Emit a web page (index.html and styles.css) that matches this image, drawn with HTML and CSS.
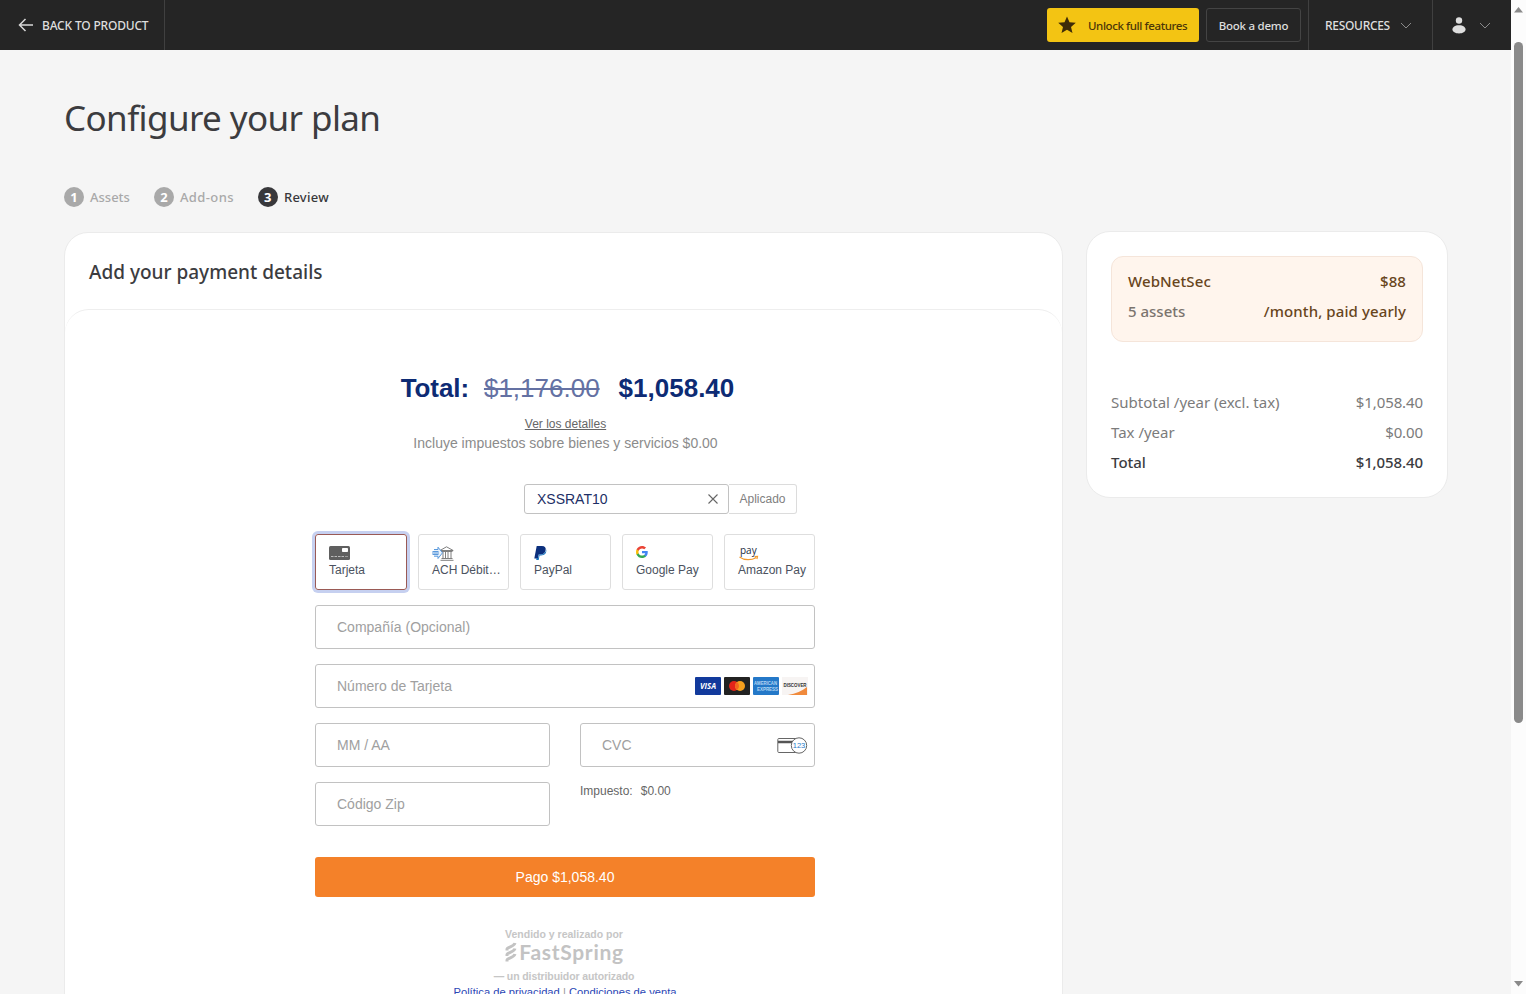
FILE: index.html
```html
<!DOCTYPE html>
<html lang="en">
<head>
    <meta charset="UTF-8">
    <meta name="viewport" content="width=device-width, initial-scale=1.0">
    <title>Configure your plan</title>
    <link rel="stylesheet" href="styles.css">
</head>
<body>
    <div class="page">
        <header class="topbar">
            <a class="back" href="#">
                <svg width="16" height="14" viewBox="0 0 16 14" fill="none" stroke="#d8d8d8" stroke-width="1.5"><path d="M15 7H1.5M7.5 1L1.5 7l6 6"/></svg>
                <span>BACK TO PRODUCT</span>
            </a>
            <div class="actions">
                <button class="unlock">
                    <svg width="18" height="18" viewBox="0 0 18 18" fill="#3f2c08"><path d="M9 0.5l2.5 5.8 6.3.5-4.8 4.1 1.5 6.2L9 13.8l-5.5 3.3L5 10.900 0.200 6.800l6.300-.5z"/></svg>
                    <span>Unlock full features</span>
                </button>
                <button class="demo">Book a demo</button>
            </div>
            <div class="resources">
                <span>RESOURCES</span>
                <svg width="12" height="7" viewBox="0 0 12 7" fill="none" stroke="#8a8a8a"><path d="M1 1l5 5 5-5"/></svg>
            </div>
            <div class="user">
                <svg width="14" height="17" viewBox="0 0 14 17" fill="#dedede"><circle cx="7" cy="3.500" r="3.200"/><path d="M7 8.200c4.200 0 6.600 2 6.600 4.400S10.600 16.500 7 16.500.4 15 .4 12.600 2.800 8.200 7 8.200z"/></svg>
                <svg width="12" height="7" viewBox="0 0 12 7" fill="none" stroke="#8a8a8a"><path d="M1 1l5 5 5-5"/></svg>
            </div>
        </header>

        <main>
            <h1>Configure your plan</h1>
            <ol class="steps">
                <li><b>1</b><span>Assets</span></li>
                <li><b>2</b><span>Add-ons</span></li>
                <li class="current"><b>3</b><span>Review</span></li>
            </ol>

            <div class="columns">
                <section class="payment">
                    <h2>Add your payment details</h2>
                    <div class="payment-body">
                        <form class="checkout" lang="es">
                            <div class="total">
                                <strong class="label">Total:</strong>
                                <del>$1,176.00</del>
                                <strong>$1,058.40</strong>
                            </div>
                            <a class="details" href="#">Ver los detalles</a>
                            <p class="included">Incluye impuestos sobre bienes y servicios $0.00</p>

                            <div class="coupon">
                                <div class="code">
                                    <span>XSSRAT10</span>
                                    <svg width="10" height="10" viewBox="0 0 10 10" stroke="#666" stroke-width="1.1"><path d="M.5.5l9 9M9.500.5l-9 9"/></svg>
                                </div>
                                <div class="applied">Aplicado</div>
                            </div>

                            <div class="methods">
                                <div class="method selected">
                                    <svg width="21" height="14" viewBox="0 0 21 14"><rect width="21" height="14" rx="1.500" fill="#5f5f5f"/><rect x="13" y="2" width="6" height="4" rx=".8" fill="#fff"/><path d="M2 10.500h13" stroke="#bbb" stroke-dasharray="2.500 1"/><path d="M16 10.500h3" stroke="#999"/></svg>
                                    <span>Tarjeta</span>
                                </div>
                                <div class="method">
                                    <svg width="22" height="15" viewBox="0 0 22 15" fill="none"><path d="M8 4.500L14.500.8l6.700 3.700zM9 5.500h11.500M11 6v6M13.500 6v6M16 6v6M19 6v6M9.500 12.500h11M8.500 14.300h13" stroke="#707070" stroke-width=".9"/><path d="M2 3.500h4V1.200l4.500 5.600L6 12.500v-2.300H2M.5 5.500h6M0 7h7M.5 8.500h6" fill="#eaf3fc" stroke="#4a8fd8" stroke-width=".9"/></svg>
                                    <span>ACH Débit…</span>
                                </div>
                                <div class="method">
                                    <svg width="13" height="14" viewBox="0 0 13 14"><path d="M2.700 0h5.200c3 0 4.300 1.700 3.700 4.300C11 7.500 9 8.500 6.500 8.500H4.700L3.900 12.500H.3z" fill="#0b2f7d"/><path d="M12.200 3.300c.7 4.200-1.800 6.200-5.200 6.200H5.500L4.700 14H2.200l.4-2h1.500l.8-3.500h2c2.700 0 4.700-1.500 5.300-5.200z" fill="#1272bf"/></svg>
                                    <span>PayPal</span>
                                </div>
                                <div class="method">
                                    <svg width="12" height="12" viewBox="0 0 48 48"><path fill="#4285f4" d="M47 24.500c0-1.600-.1-3.100-.4-4.500H24v9h13c-.6 3-2.300 5.400-4.800 7.100v6h7.800C44.500 38 47 31.800 47 24.500z"/><path fill="#34a853" d="M24 48c6.500 0 12-2.100 16-5.900l-7.800-6c-2.200 1.500-4.900 2.300-8.200 2.300-6.300 0-11.600-4.200-13.500-9.900H2.500v6.200C6.500 42.600 14.600 48 24 48z"/><path fill="#fbbc05" d="M10.500 28.500c-1-3-1-6.200 0-9.200v-6.200h-8c-3.300 6.800-3.300 14.800 0 21.600z"/><path fill="#ea4335" d="M24 9.500c3.500 0 6.700 1.200 9.200 3.600l6.900-6.900C35.900 2.300 30.500 0 24 0 14.600 0 6.500 5.400 2.500 13.100l8 6.200c1.900-5.700 7.200-9.800 13.500-9.800z"/></svg>
                                    <span>Google Pay</span>
                                </div>
                                <div class="method">
                                    <svg class="amazon" width="21" height="15" viewBox="0 0 21 15"><text x="2" y="8" class="pay-word">pay</text><path d="M1.500 11c5 3.600 12 3.300 16.500.7M16.500 10.600l3-.2-.6 2.600" fill="none" stroke="#f39a2d" stroke-width="1.200"/></svg>
                                    <span>Amazon Pay</span>
                                </div>
                            </div>

                            <div class="fields">
                                <div class="field wide">Compañía (Opcional)</div>
                                <div class="field wide">
                                    <span>Número de Tarjeta</span>
                                    <div class="brands">
                                        <svg width="26" height="18" viewBox="0 0 26 18"><rect width="26" height="18" rx="1" fill="#123a9c"/><text x="5" y="11.700" textLength="16" lengthAdjust="spacingAndGlyphs" class="visa-word">VISA</text></svg>
                                        <svg width="26" height="18" viewBox="0 0 26 18"><rect width="26" height="18" rx="1" fill="#222"/><circle cx="10" cy="9" r="5" fill="#e2231a"/><circle cx="16" cy="9" r="5" fill="#f6a01e"/><path d="M13 5a5 5 0 0 1 0 8 5 5 0 0 1 0-8z" fill="#f2651f"/></svg>
                                        <svg width="26" height="18" viewBox="0 0 26 18"><rect width="26" height="18" rx="1" fill="#2478c8"/><text x="1" y="8.300" textLength="23" lengthAdjust="spacingAndGlyphs" class="amex-word">AMERICAN</text><text x="4" y="14" textLength="21" lengthAdjust="spacingAndGlyphs" class="amex-word">EXPRESS</text></svg>
                                        <svg width="26" height="18" viewBox="0 0 26 18"><rect width="26" height="18" fill="#f7f4f3"/><path d="M25 10v8H6c8-1.500 14-4 19-8z" fill="#f08a3c"/><text x="1.500" y="10" textLength="23" lengthAdjust="spacingAndGlyphs" class="discover-word">DISCOVER</text></svg>
                                    </div>
                                </div>
                                <div class="field">MM / AA</div>
                                <div class="field">
                                    <span>CVC</span>
                                    <svg width="31" height="17" viewBox="0 0 31 17" fill="none"><rect x=".8" y="1.500" width="24" height="14" rx="1" stroke="#666"/><path d="M1 5h20" stroke="#555" stroke-width="2.500"/><circle cx="22" cy="8.500" r="7.700" fill="#fff" stroke="#666"/><text x="22" y="11.200" text-anchor="middle" class="cvc-digits">123</text></svg>
                                </div>
                                <div class="field">Código Zip</div>
                                <div class="tax"><span>Impuesto:</span><span>$0.00</span></div>
                            </div>

                            <button class="pay" type="button">Pago $1,058.40</button>

                            <div class="seller">
                                <span>Vendido y realizado por</span>
                                <div class="fastspring">
                                    <svg width="10" height="20" viewBox="0 0 10 20" fill="none" stroke="#c3c3c3" stroke-width="3"><path d="M1 8.500V7c0-2 7-2 8-6M1 14v-1.500c0-2 7-2 8-6M1 19.500V18c0-2 7-2 8-6"/></svg>
                                    <span>FastSpring</span>
                                </div>
                                <span class="reseller">— un distribuidor autorizado</span>
                                <div class="links"><a href="#">Política de privacidad</a> | <a href="#">Condiciones de venta</a></div>
                            </div>
                        </form>
                    </div>
                </section>

                <aside class="summary">
                    <div class="plan">
                        <div class="row"><span>WebNetSec</span><span>$88</span></div>
                        <div class="row"><span class="assets">5 assets</span><span>/month, paid yearly</span></div>
                    </div>
                    <div class="row"><span>Subtotal /year (excl. tax)</span><span class="amount">$1,058.40</span></div>
                    <div class="row"><span>Tax /year</span><span class="amount">$0.00</span></div>
                    <div class="row due"><span>Total</span><span class="amount">$1,058.40</span></div>
                </aside>
            </div>
        </main>
    </div>

    <div class="scrollbar">
        <svg width="9" height="6" viewBox="0 0 9 6" fill="#8a8a8a"><path d="M4.500 0L9 5.500H0z"/></svg>
        <div class="thumb"></div>
        <svg width="9" height="6" viewBox="0 0 9 6" fill="#8a8a8a"><path d="M4.500 5.500L9 0H0z"/></svg>
    </div>
</body>
</html>
```
FILE: styles.css
```css
* {
    margin: 0;
    padding: 0;
    box-sizing: border-box;
}

body {
    display: flex;
    height: 100vh;
    overflow: hidden;
    font-family: "Noto Sans", sans-serif;
    color: #3c3c3f;
    background-color: #fff;
}

svg {
    display: block;
    flex: none;
    overflow: visible;
}

button {
    font-family: inherit;
    border: none;
}

.page {
    flex: 1;
    height: 100vh;
    overflow: hidden;
    background-color: #f5f5f5;
}

/* top bar */
.topbar {
    display: flex;
    height: 50px;
    background-color: #252525;
    color: #dedede;
    font-size: 12px;
    font-weight: 500;
}

.back {
    display: flex;
    align-items: center;
    gap: 8px;
    width: 165px;
    padding-left: 18px;
    border-right: 1px solid #404040;
    color: #dedede;
    text-decoration: none;
    letter-spacing: -0.18px;
    white-space: nowrap;
}

.actions {
    display: flex;
    align-items: center;
    gap: 7px;
    margin-left: auto;
    padding-right: 7px;
}

.unlock {
    display: flex;
    align-items: center;
    gap: 12px;
    width: 152px;
    height: 34px;
    padding-left: 11px;
    border-radius: 3px;
    background-color: #f3c413;
    color: #4b3608;
    font-size: 11.5px;
    font-weight: 500;
    letter-spacing: -0.4px;
    white-space: nowrap;
}

.demo {
    width: 95px;
    height: 34px;
    border: 1px solid #444;
    border-radius: 3px;
    background-color: transparent;
    color: #dedede;
    font-size: 11.5px;
    font-weight: 500;
    letter-spacing: -0.25px;
}

.resources,
.user {
    display: flex;
    align-items: center;
    border-left: 1px solid #404040;
}

.resources {
    gap: 10px;
    width: 124px;
    padding-left: 16px;
    letter-spacing: -0.3px;
}

.user {
    gap: 13px;
    width: 79px;
    padding-left: 19px;
}

/* heading and steps */
main {
    padding: 44px 63px 0 64px;
}

h1 {
    font-size: 35px;
    font-weight: 400;
    line-height: 48px;
    letter-spacing: -0.6px;
}

.steps {
    display: flex;
    gap: 24px;
    margin-top: 45px;
    list-style: none;
    font-size: 13px;
    font-weight: 500;
    line-height: 20px;
    color: #a9a9a9;
}

.steps li {
    display: flex;
    gap: 6px;
}

.steps li:nth-child(2) span {
    letter-spacing: 0.4px;
}

.steps b {
    width: 20px;
    height: 20px;
    border-radius: 50%;
    background-color: #a9a9a9;
    color: #fff;
    text-align: center;
}

.steps .current {
    color: #38383b;
    letter-spacing: 0.25px;
}

.steps .current b {
    background-color: #38383b;
}

.columns {
    display: flex;
    align-items: flex-start;
    gap: 23px;
    margin-top: 25px;
}

/* payment card */
.payment {
    width: 999px;
    height: 820px;
    border: 1px solid #ebebeb;
    border-radius: 24px;
    background-color: #fff;
}

.payment h2 {
    height: 76px;
    padding-left: 24px;
    font-size: 19px;
    font-weight: 500;
    line-height: 78px;
}

.payment-body {
    height: 700px;
    padding: 63px 0 0 250px;
    border-top: 1px solid #eee;
    border-radius: 24px;
}

.checkout {
    width: 500px;
    font-family: "Liberation Sans", Arial, sans-serif;
    color: #808080;
    text-align: center;
}

.total {
    display: flex;
    justify-content: center;
    padding-left: 5px;
    color: #0d2b74;
    font-size: 26px;
    line-height: 30px;
}

.total .label {
    letter-spacing: -0.1px;
}

.total del {
    margin: 0 19px 0 15px;
    color: #6471a3;
    text-decoration-thickness: 2px;
}

.details {
    display: block;
    margin-top: 13px;
    padding-left: 1px;
    color: #666;
    font-size: 12px;
    line-height: 16px;
}

.included {
    margin-top: 2px;
    padding-left: 1px;
    color: #8b8b8b;
    font-size: 14px;
    line-height: 18px;
}

.coupon {
    display: flex;
    height: 30px;
    margin: 32px 0 0 209px;
}

.code {
    display: flex;
    align-items: center;
    justify-content: space-between;
    width: 205px;
    padding: 0 10px 0 12px;
    border: 1px solid #c2c2c2;
    border-radius: 3px;
    color: #1d2f66;
    font-size: 14px;
}

.applied {
    width: 68px;
    border: 1px solid #dcdcdc;
    border-left: none;
    border-radius: 0 3px 3px 0;
    font-size: 12px;
    line-height: 28px;
}

/* payment methods */
.methods {
    display: grid;
    grid-template-columns: 92px repeat(4, 91px);
    gap: 11px;
    margin-top: 20px;
}

.method {
    display: flex;
    flex-direction: column;
    justify-content: space-between;
    height: 56px;
    padding: 11px 6px 12px 13px;
    border: 1px solid #dedede;
    border-radius: 3px;
    color: #4b5260;
    font-size: 12px;
    line-height: 14px;
    text-align: left;
    white-space: nowrap;
}

.method.selected {
    border-color: #9a5a55;
    box-shadow: 0 0 0 3px #c6d0f0;
}

.pay-word {
    font: 500 10px "Open Sans", sans-serif;
    fill: #222b3b;
}

/* form fields */
.fields {
    display: grid;
    grid-template-columns: 235px 235px;
    gap: 15px 30px;
    margin-top: 15px;
}

.field {
    display: flex;
    align-items: center;
    justify-content: space-between;
    height: 44px;
    padding: 0 6px 0 21px;
    border: 1px solid #c2c2c2;
    border-radius: 3px;
    color: #a0a0a0;
    font-size: 14px;
}

.wide {
    grid-column: span 2;
}

.brands {
    display: flex;
    gap: 3px;
}

.visa-word {
    font: italic bold 8px "Open Sans", sans-serif;
    fill: #fff;
}

.amex-word {
    font: bold 5.5px "Liberation Sans", sans-serif;
    fill: #b5d6f3;
}

.discover-word {
    font: bold 5px "Liberation Sans", sans-serif;
    fill: #333;
}

.cvc-digits {
    font: 7.5px "Liberation Sans", sans-serif;
    fill: #2a7bc8;
}

.tax {
    display: flex;
    gap: 8px;
    padding-top: 1px;
    color: #666;
    font-size: 12px;
    line-height: 17px;
}

.pay {
    width: 100%;
    height: 40px;
    margin-top: 31px;
    border-radius: 3px;
    background-color: #f48129;
    color: #fff;
    font-size: 14px;
}

.seller {
    margin-top: 31px;
    padding-right: 2px;
    color: #c6c6c6;
    font-size: 10.5px;
    font-weight: bold;
    line-height: 13px;
}

.fastspring {
    display: flex;
    justify-content: center;
    gap: 3px;
    margin: 1px 0 8px;
    padding-left: 2px;
    color: #c3c3c3;
    font-family: Lato, sans-serif;
    font-size: 21px;
    line-height: 20px;
    letter-spacing: 0.7px;
}

.reseller {
    letter-spacing: -0.1px;
}

.links {
    margin-top: 3px;
    padding-left: 2px;
    color: #999;
    font-size: 11.2px;
    font-weight: normal;
}

.links a {
    color: #2b47b5;
}

/* order summary */
.summary {
    width: 362px;
    height: 267px;
    margin-top: -1px;
    padding: 24px;
    border: 1px solid #ebebeb;
    border-radius: 24px;
    background-color: #fff;
    color: #7b7b7b;
    font-size: 15px;
}

.row {
    display: flex;
    justify-content: space-between;
    line-height: 30px;
}

.plan {
    height: 86px;
    margin-bottom: 45px;
    padding: 9px 16px;
    border: 1px solid #f5e5da;
    border-radius: 12px;
    background-color: #fff5ed;
    color: #68451c;
    font-weight: 500;
    letter-spacing: 0.1px;
}

.assets {
    color: #7b746e;
    letter-spacing: 0;
}

.amount {
    letter-spacing: -0.1px;
}

.due {
    color: #3c3c3f;
    font-weight: 500;
}

/* window scrollbar */
.scrollbar {
    display: flex;
    flex-direction: column;
    align-items: center;
    width: 15px;
    padding: 7px 0;
    background-color: #fcfcfc;
}

.thumb {
    width: 9px;
    height: 681px;
    margin: 29px 0 auto;
    border-radius: 5px;
    background-color: #8a8a8a;
}
```
